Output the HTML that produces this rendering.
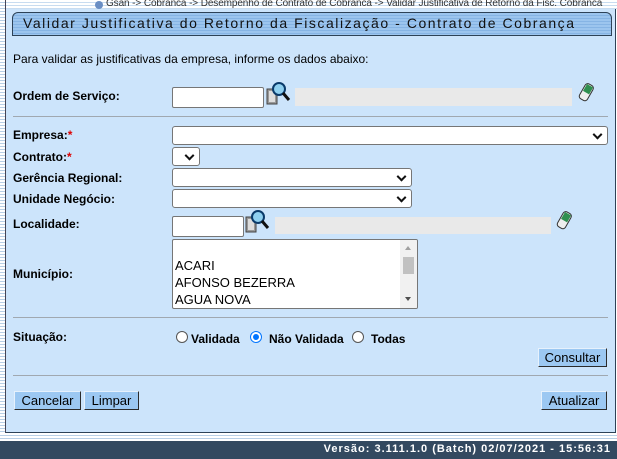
<!DOCTYPE html>
<html><head><meta charset="utf-8"><style>
*{box-sizing:border-box;margin:0;padding:0}
body{width:617px;height:459px;overflow:hidden;background:#fff;font-family:"Liberation Sans",Arial,sans-serif;font-size:12px;position:relative}
.a{position:absolute}
.lbl{position:absolute;font-weight:bold;font-size:12px;color:#000}
.inp{position:absolute;background:#fff;border:1px solid #767676;border-radius:2px}
.sel{position:absolute;background:#fff;border:1px solid #767676;border-radius:3px}
.sel:after{content:"";position:absolute;right:6px;top:50%;width:5px;height:5px;border-right:2px solid #111;border-bottom:2px solid #111;transform:translateY(-70%) rotate(45deg)}
.ro{position:absolute;background:#e9e9e9}
.btn{position:absolute;background:#9cc8f2;border:1px solid #2b2b2b;border-top-color:#e6f1fc;border-left-color:#e6f1fc;font-size:13px;color:#000;text-align:center;line-height:17px;height:19px}
.hr{position:absolute;left:13px;width:595px;height:1px;background:#a0a8b0}
.rad{position:absolute;width:12px;height:12px;border:1px solid #555;border-radius:50%;background:#fff}
</style></head><body>
<div class="a" style="left:0;top:0;width:617px;height:10px;background:repeating-linear-gradient(#fff 0 2px,#c8dcf0 2px 3px)"></div>
<div class="a" style="left:0;top:0;width:6px;height:433px;background:repeating-linear-gradient(#fff 0 2px,#b8cfe6 2px 3px);border-right:1px solid #445"></div>
<div class="a" style="left:95px;top:1px;width:8px;height:8px;border-radius:50%;background:#6a8ec4"></div>
<div class="a" style="left:106px;top:-2px;font-size:10px;color:#333;white-space:nowrap;letter-spacing:-0.1px">Gsan -&gt; Cobranca -&gt; Desempenho de Contrato de Cobranca -&gt; Validar Justificativa de Retorno da Fisc. Cobranca</div>
<div class="a" style="left:6px;top:9px;width:610px;height:424px;background:#cce4fb;border:1px solid #2d4257;border-top:none;border-left:none"></div>
<div class="a" style="left:12px;top:12px;width:600px;height:24px;border:1px solid #2d4257;border-radius:6px 6px 0 0;background:repeating-linear-gradient(#9cc5ee 0 2px,#86b4e4 2px 3px)"></div>
<div class="a" style="left:23px;top:15px;font-size:14px;letter-spacing:1.55px;color:#111">Validar Justificativa do Retorno da Fiscalização - Contrato de Cobrança</div>
<div class="a" style="left:13px;top:52px;font-size:12px">Para validar as justificativas da empresa, informe os dados abaixo:</div>

<div class="lbl" style="left:13px;top:89px">Ordem de Serviço:</div>
<div class="inp" style="left:172px;top:87px;width:92px;height:21px"></div>
<svg class="a" style="left:266px;top:81px" width="26" height="26"><rect x="1" y="8" width="10" height="15" fill="#999" stroke="#444"/><rect x="3" y="10" width="6" height="11" fill="#ddd"/><circle cx="13" cy="8" r="6" fill="#8fd0f0" stroke="#0a3a6a" stroke-width="2"/><line x1="17" y1="12" x2="23" y2="19" stroke="#111" stroke-width="3"/></svg>
<div class="ro" style="left:295px;top:88px;width:277px;height:18px"></div>
<svg class="a" style="left:578px;top:82px" width="18" height="20"><g transform="rotate(30 9 10)"><rect x="4" y="2" width="9" height="17" rx="3" fill="#eee" stroke="#333"/><rect x="5" y="3" width="7" height="8" fill="#2f8f4f"/></g></svg>

<div class="hr" style="top:116px"></div>
<div class="lbl" style="left:13px;top:128px">Empresa:<span style="color:#d00">*</span></div>
<div class="sel" style="left:172px;top:126px;width:436px;height:19px"></div>
<div class="lbl" style="left:13px;top:150px">Contrato:<span style="color:#d00">*</span></div>
<div class="sel" style="left:172px;top:147px;width:28px;height:19px"></div>
<div class="lbl" style="left:13px;top:171px">Gerência Regional:</div>
<div class="sel" style="left:172px;top:168px;width:240px;height:19px"></div>
<div class="lbl" style="left:13px;top:192px">Unidade Negócio:</div>
<div class="sel" style="left:172px;top:189px;width:240px;height:19px"></div>

<div class="lbl" style="left:13px;top:217px">Localidade:</div>
<div class="inp" style="left:172px;top:216px;width:72px;height:21px"></div>
<svg class="a" style="left:245px;top:209px" width="26" height="26"><rect x="1" y="8" width="10" height="15" fill="#999" stroke="#444"/><rect x="3" y="10" width="6" height="11" fill="#ddd"/><circle cx="13" cy="8" r="6" fill="#8fd0f0" stroke="#0a3a6a" stroke-width="2"/><line x1="17" y1="12" x2="23" y2="19" stroke="#111" stroke-width="3"/></svg>
<div class="ro" style="left:275px;top:217px;width:276px;height:17px"></div>
<svg class="a" style="left:556px;top:210px" width="18" height="20"><g transform="rotate(30 9 10)"><rect x="4" y="2" width="9" height="17" rx="3" fill="#eee" stroke="#333"/><rect x="5" y="3" width="7" height="8" fill="#2f8f4f"/></g></svg>

<div class="lbl" style="left:13px;top:267px">Município:</div>
<div class="inp" style="left:172px;top:239px;width:246px;height:70px;border-radius:2px;overflow:hidden">
<div class="a" style="left:2px;top:17px;font-size:13px;line-height:17px">ACARI<br>AFONSO BEZERRA<br>AGUA NOVA</div>
<div class="a" style="left:227px;top:0;width:17px;height:68px;background:#f1f1f1"></div>
<div class="a" style="left:230px;top:17px;width:11px;height:17px;background:#c1c1c1"></div>
<div class="a" style="left:232px;top:6px;border:3px solid transparent;border-bottom:4px solid #a0a0a0;border-top:none"></div>
<div class="a" style="left:232px;top:57px;border:3px solid transparent;border-top:4px solid #505050;border-bottom:none"></div>
</div>

<div class="hr" style="top:317px"></div>
<div class="lbl" style="left:13px;top:330px">Situação:</div>
<div class="rad" style="left:176px;top:331px"></div>
<div class="lbl" style="left:191px;top:332px">Validada</div>
<div class="rad" style="left:250px;top:331px;border:1px solid #0075ff"><div class="a" style="left:2px;top:2px;width:6px;height:6px;border-radius:50%;background:#0075ff"></div></div>
<div class="lbl" style="left:269px;top:332px">Não Validada</div>
<div class="rad" style="left:352px;top:331px"></div>
<div class="lbl" style="left:371px;top:332px">Todas</div>
<div class="btn" style="left:538px;top:348px;width:69px">Consultar</div>
<div class="hr" style="top:375px"></div>
<div class="btn" style="left:14px;top:391px;width:67px">Cancelar</div>
<div class="btn" style="left:84px;top:391px;width:55px">Limpar</div>
<div class="btn" style="left:541px;top:391px;width:66px">Atualizar</div>

<div class="a" style="left:0;top:433px;width:617px;height:8px;background:repeating-linear-gradient(#fff 0 2px,#b8cfe6 2px 3px)"></div>
<div class="a" style="left:0;top:441px;width:617px;height:18px;background:#334960"></div>
<div class="a" style="right:6px;top:443px;font-size:11px;font-weight:bold;color:#fff;letter-spacing:1px;white-space:nowrap">Versão: 3.111.1.0 (Batch) 02/07/2021 - 15:56:31</div>
</body></html>
